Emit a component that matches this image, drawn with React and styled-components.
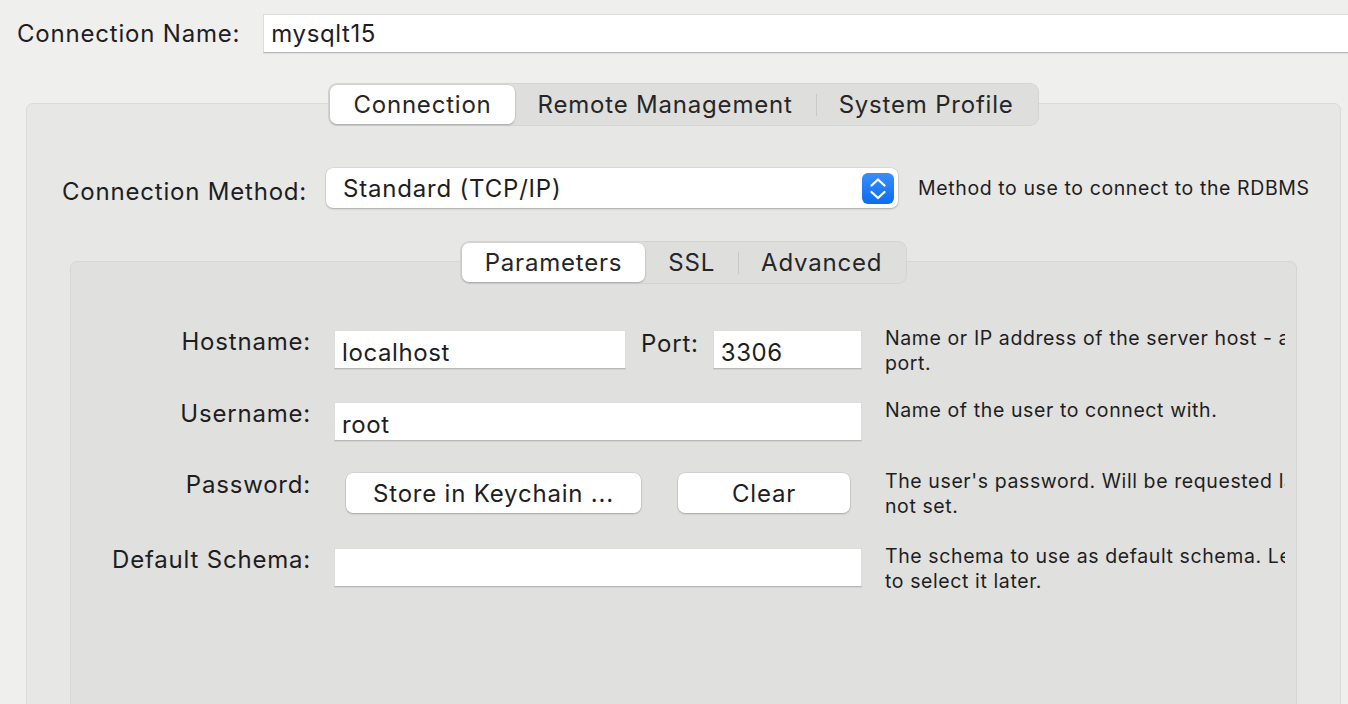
import React from "react";
import styled, { createGlobalStyle } from "styled-components";

const Global = createGlobalStyle`
  html, body {
    margin: 0;
    background: #efefee;
    overflow: hidden;
  }
  body {
    font-family: Inter, "Liberation Sans", sans-serif;
    color: #1e1e1e;
    letter-spacing: 0.8px;
  }
`;

const Page = styled.div`
  height: 704px;
  padding-top: 14px;
  box-sizing: border-box;
`;

const NameRow = styled.div`
  display: flex;
  align-items: center;
  gap: 23px;
  padding-left: 17px;
`;

const Label = styled.div`
  font-size: 24px;
  line-height: 24px;
  white-space: nowrap;
  text-align: ${(p) => (p.$right ? "right" : "left")};
`;

const TextField = styled.input`
  box-sizing: border-box;
  height: ${(p) => p.$h || 39}px;
  width: ${(p) => (p.$w ? p.$w + "px" : "auto")};
  flex: ${(p) => (p.$w ? "none" : "1")};
  padding: 5px 7px 0;
  margin: 0;
  border: 1px solid #dcdcdb;
  border-bottom-color: #b8b8b8;
  box-shadow: 0 1px 0 rgba(0, 0, 0, 0.06);
  background: #fff;
  font-family: inherit;
  font-size: 24px;
  letter-spacing: 0.6px;
  color: #1e1e1e;
  outline: none;
  min-width: 0;
`;

const NameField = styled(TextField)`
  padding-top: 0;
  margin-right: -6px;
`;

const Section = styled.div`
  display: flex;
  flex-direction: column;
  margin: 30px 7px 0 26px;
`;

const TabStrip = styled.div`
  align-self: center;
  display: flex;
  align-items: center;
  height: 43px;
  box-sizing: border-box;
  padding: 1px;
  background: #dededd;
  border: 1px solid rgba(0, 0, 0, 0.045);
  border-radius: 9px;
  margin-bottom: -23px;
  position: relative;
  z-index: 1;
`;

const Tab = styled.div`
  height: 39px;
  display: flex;
  align-items: center;
  padding: 0 23px;
  font-size: 24px;
  color: #262626;
  border-radius: 7px;
  position: relative;
  background: ${(p) => (p.$active ? "#fff" : "transparent")};
  box-shadow: ${(p) =>
    p.$active ? "0 1px 2px rgba(0,0,0,0.22), 0 0 0 0.5px rgba(0,0,0,0.08)" : "none"};
  ${(p) =>
    p.$sep &&
    `
    &::before {
      content: "";
      position: absolute;
      left: 0;
      top: 9px;
      width: 1px;
      height: 22px;
      background: #c9c9c8;
    }
  `}
`;

const Panel = styled.div`
  background: ${(p) => p.$bg};
  border: 1px solid ${(p) => p.$border};
  border-radius: 7px;
  padding-top: ${(p) => p.$pt}px;
  height: ${(p) => p.$h}px;
  box-sizing: border-box;
  display: flex;
  flex-direction: column;
`;

const MethodRow = styled.div`
  display: flex;
  align-items: center;
  padding-left: 35px;
  margin-bottom: 33px;
`;

const MethodLabel = styled(Label)`
  margin-right: 19px;
  padding-top: 8px;
`;

const Select = styled.div`
  width: 572px;
  height: 40px;
  box-sizing: border-box;
  background: #fff;
  border-radius: 7px;
  box-shadow: 0 1px 2px rgba(0, 0, 0, 0.22), 0 0 0 0.5px rgba(0, 0, 0, 0.1);
  display: flex;
  align-items: center;
  justify-content: space-between;
  padding: 0 4px 0 17px;
  font-size: 24px;
  margin-right: 20px;
`;

const Stepper = styled.div`
  width: 32px;
  height: 31px;
  border-radius: 6px;
  background: linear-gradient(#3a8ef9, #0d6cf0);
  display: flex;
`;

const Hint = styled.div`
  font-size: 19.5px;
  line-height: 25px;
  letter-spacing: 0.6px;
  color: #1e1e1e;
  white-space: nowrap;
  overflow: hidden;
`;

const InnerSection = styled(Section)`
  margin: 0 43px;
`;

const FormGrid = styled.div`
  display: grid;
  grid-template-columns: 240px 528px 400px;
  grid-template-rows: 72px 71px 75px 60px;
  column-gap: 23px;
  align-items: start;
`;

const FieldLine = styled.div`
  display: flex;
  align-items: flex-start;
`;

const PortLabel = styled(Label)`
  margin: 2px 14px 0 15px;
`;

const RowHint = styled(Hint)`
  margin-top: -4px;
`;

const Button = styled.div`
  height: 40px;
  width: ${(p) => p.$w}px;
  box-sizing: border-box;
  background: #fff;
  border-radius: 7px;
  box-shadow: 0 1px 2px rgba(0, 0, 0, 0.22), 0 0 0 0.5px rgba(0, 0, 0, 0.1);
  display: flex;
  align-items: center;
  justify-content: center;
  font-size: 24px;
  color: #1e1e1e;
`;

const ButtonRow = styled.div`
  display: flex;
  gap: 37px;
  padding-left: 12px;
`;

const Chevrons = () => (
  <svg width="32" height="31" viewBox="0 0 32 31">
    <path
      d="M9.5 12.5 L16 6.5 L22.5 12.5 M9.5 19 L16 25 L22.5 19"
      fill="none"
      stroke="#fff"
      strokeWidth="2.3"
      strokeLinecap="round"
      strokeLinejoin="round"
    />
  </svg>
);

const App = () => {
  return (
    <Page>
      <Global />
      <NameRow>
        <Label>Connection Name:</Label>
        <NameField defaultValue="mysqlt15" />
      </NameRow>

      <Section>
        <TabStrip>
          <Tab $active>Connection</Tab>
          <Tab>Remote Management</Tab>
          <Tab $sep>System Profile</Tab>
        </TabStrip>
        <Panel $bg="#e7e7e6" $border="#dbdbda" $pt={64} $h={640}>
          <MethodRow>
            <MethodLabel>Connection Method:</MethodLabel>
            <Select>
              <span>Standard (TCP/IP)</span>
              <Stepper>
                <Chevrons />
              </Stepper>
            </Select>
            <Hint>Method to use to connect to the RDBMS</Hint>
          </MethodRow>

          <InnerSection>
            <TabStrip>
              <Tab $active>Parameters</Tab>
              <Tab>SSL</Tab>
              <Tab $sep>Advanced</Tab>
            </TabStrip>
            <Panel $bg="#e0e0df" $border="#d6d6d5" $pt={68} $h={480}>
              <FormGrid>
                <Label $right>Hostname:</Label>
                <FieldLine>
                  <TextField $w={292} defaultValue="localhost" />
                  <PortLabel>Port:</PortLabel>
                  <TextField defaultValue="3306" />
                </FieldLine>
                <RowHint>
                  Name or IP address of the server host - and TCP/IP
                  <br />
                  port.
                </RowHint>

                <Label $right>Username:</Label>
                <TextField defaultValue="root" />
                <RowHint>Name of the user to connect with.</RowHint>

                <Label $right>Password:</Label>
                <ButtonRow>
                  <Button $w={295}>Store in Keychain ...</Button>
                  <Button $w={172}>Clear</Button>
                </ButtonRow>
                <RowHint>
                  The user's password. Will be requested later if it's
                  <br />
                  not set.
                </RowHint>

                <Label $right>Default Schema:</Label>
                <TextField defaultValue="" />
                <RowHint>
                  The schema to use as default schema. Leave blank
                  <br />
                  to select it later.
                </RowHint>
              </FormGrid>
            </Panel>
          </InnerSection>
        </Panel>
      </Section>
    </Page>
  );
};

export default App;
